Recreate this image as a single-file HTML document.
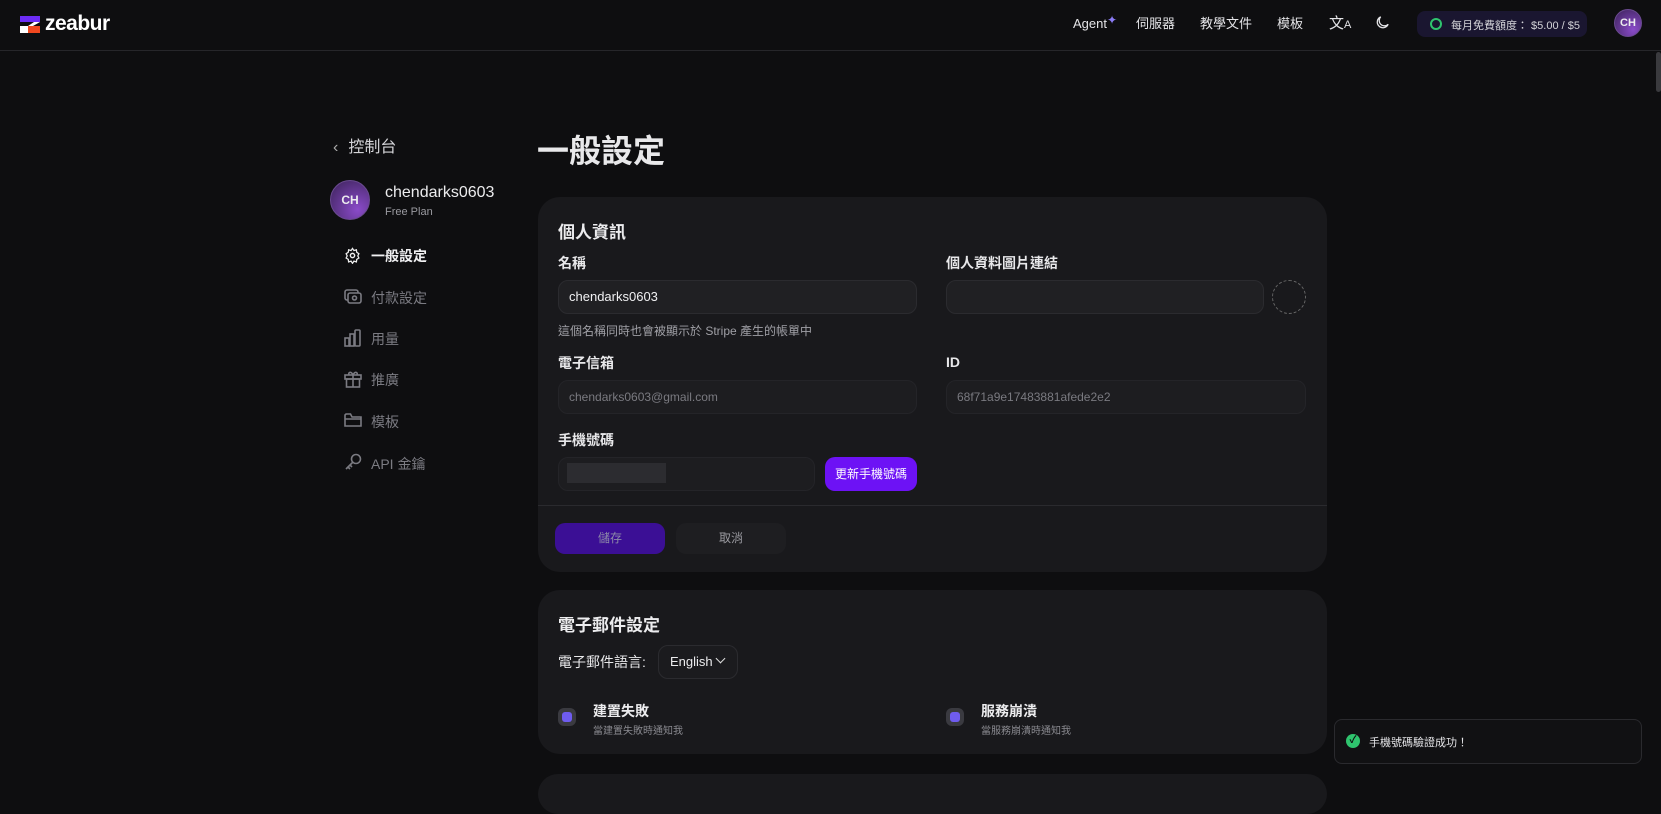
<!DOCTYPE html>
<html><head><meta charset="utf-8"><style>
*{box-sizing:border-box;margin:0;padding:0}
body{width:1661px;height:783px;overflow:hidden;background:#0e0e10;font-family:"Liberation Sans","Noto Sans CJK TC",sans-serif;color:#ececee;position:relative}
.a{position:absolute}
.hdr{left:0;top:0;width:1661px;height:51px;border-bottom:1px solid #26262a;background:#0e0e10}
.nav{font-size:13px;color:#e4e4e7;top:13px}
.card{background:#19191c;border-radius:22px}
.inp{background:#202023;border:1px solid #2b2b2f;border-radius:10px}
.lbl{font-size:14px;font-weight:bold;color:#e8e8ea}
.mi{font-size:14px;color:#7b7b82}
.ic{stroke:#7b7b82;fill:none;stroke-width:1.6}
</style></head><body>
<div class="a hdr"></div>
<svg class="a" style="left:20px;top:16px" width="21" height="17" viewBox="0 0 21 17"><rect x="0" y="0" width="20" height="6" fill="#6c2cf5"/><rect x="0" y="10" width="8" height="7" fill="#fff"/><rect x="8" y="10" width="12" height="7" fill="#f0481f"/><polygon points="14,6 20,6 13,10 8,10" fill="#fff"/></svg>
<div class="a" style="left:45px;top:12px;font-size:21px;font-weight:bold;color:#fff;letter-spacing:-0.5px">zeabur</div>
<div class="a nav" style="left:1073px">Agent<span style="color:#8b7cf6;font-size:12px;vertical-align:4px">✦</span></div>
<div class="a nav" style="left:1136px">伺服器</div>
<div class="a nav" style="left:1200px">教學文件</div>
<div class="a nav" style="left:1277px">模板</div>
<div class="a nav" style="left:1329px;top:12px;font-size:15px">文<span style="font-size:11px">A</span></div>
<svg class="a" style="left:1374px;top:14px" width="17" height="17" viewBox="0 0 24 24"><path d="M20 14.5A8 8 0 1 1 9.5 4a7 7 0 0 0 10.5 10.5z" fill="none" stroke="#e4e4e7" stroke-width="1.8"/></svg>
<div class="a" style="left:1417px;top:11px;width:170px;height:26px;border-radius:8px;background:#1a1630"></div>
<div class="a" style="left:1430px;top:18px;width:12px;height:12px;border-radius:50%;border:2px solid #2fc46e"></div>
<div class="a" style="left:1451px;top:17px;font-size:11px;color:#d4d4d8">每月免費額度： $5.00 / $5</div>
<div class="a" style="left:1614px;top:9px;width:28px;height:28px;border-radius:50%;background:radial-gradient(circle at 70% 75%,#8a4bc9,#3b2258);border:1px solid #6a4a90;font-size:11px;font-weight:bold;text-align:center;line-height:26px">CH</div>
<div class="a" style="left:1656px;top:52px;width:5px;height:40px;background:#3a3a3e;border-radius:3px"></div>

<div class="a" style="left:333px;top:133px;font-size:16px;color:#d4d4d8"><span style="color:#aaa;margin-right:10px">‹</span>控制台</div>
<div class="a" style="left:330px;top:180px;width:40px;height:40px;border-radius:50%;background:radial-gradient(circle at 70% 75%,#8a4bc9,#3b2258);border:1px solid #6a4a90;font-size:12px;font-weight:bold;text-align:center;line-height:38px">CH</div>
<div class="a" style="left:385px;top:184px;font-size:16px;color:#ececee">chendarks0603</div>
<div class="a" style="left:385px;top:206px;font-size:11px;color:#9a9aa0">Free Plan</div>
<svg class="a" style="left:344px;top:247px" width="17" height="17" viewBox="0 0 24 24"><circle cx="12" cy="12" r="3" fill="none" stroke="#eee" stroke-width="2"/><path d="M12 2l2 3 3.5-1 .5 3.5 3 2-1.5 3 1.5 3-3 2-.5 3.5-3.5-1-2 3-2-3-3.5 1-.5-3.5-3-2 1.5-3-1.5-3 3-2 .5-3.5 3.5 1z" fill="none" stroke="#eee" stroke-width="1.8"/></svg>
<div class="a" style="left:371px;top:246px;font-size:14px;font-weight:bold;color:#f0f0f2">一般設定</div>
<svg class="a" style="left:344px;top:288px" width="18" height="17" viewBox="0 0 18 17"><rect class="ic" x="1" y="2" width="13" height="10" rx="2"/><rect class="ic" x="4" y="5" width="13" height="10" rx="2" style="fill:#0e0e10"/><circle class="ic" cx="10.5" cy="10" r="2"/></svg>
<div class="a mi" style="left:371px;top:288px">付款設定</div>
<svg class="a" style="left:344px;top:329px" width="18" height="18" viewBox="0 0 18 18"><rect class="ic" x="1" y="9" width="4" height="8"/><rect class="ic" x="6" y="5" width="4" height="12"/><rect class="ic" x="11" y="1" width="5" height="16" rx="1"/></svg>
<div class="a mi" style="left:371px;top:329px">用量</div>
<svg class="a" style="left:344px;top:370px" width="18" height="18" viewBox="0 0 18 18"><rect class="ic" x="1" y="5" width="16" height="4"/><rect class="ic" x="2.5" y="9" width="13" height="8"/><path class="ic" d="M9 5v12M9 5C7 1 4 2 5 5M9 5c2-4 5-3 4 0"/></svg>
<div class="a mi" style="left:371px;top:370px">推廣</div>
<svg class="a" style="left:344px;top:412px" width="18" height="16" viewBox="0 0 18 16"><path class="ic" d="M1 3v11h16V5H8L6.5 2H2z M1 7h16"/></svg>
<div class="a mi" style="left:371px;top:412px">模板</div>
<svg class="a" style="left:344px;top:453px" width="18" height="18" viewBox="0 0 18 18"><circle class="ic" cx="12" cy="6" r="4.5"/><path class="ic" d="M9 9l-7 7M4 14l2 2M6 12l2 2"/></svg>
<div class="a mi" style="left:371px;top:454px">API 金鑰</div>

<div class="a" style="left:537px;top:126px;font-size:32px;font-weight:bold;color:#e8e8ea">一般設定</div>

<div class="a card" style="left:538px;top:197px;width:789px;height:375px"></div>
<div class="a" style="left:558px;top:218px;font-size:17px;font-weight:bold">個人資訊</div>
<div class="a lbl" style="left:558px;top:253px">名稱</div>
<div class="a inp" style="left:558px;top:280px;width:359px;height:34px"></div>
<div class="a" style="left:569px;top:289px;font-size:13px;color:#f0f0f2">chendarks0603</div>
<div class="a" style="left:558px;top:322px;font-size:12px;color:#a0a0a6">這個名稱同時也會被顯示於 Stripe 產生的帳單中</div>
<div class="a lbl" style="left:946px;top:253px">個人資料圖片連結</div>
<div class="a inp" style="left:946px;top:280px;width:318px;height:34px"></div>
<div class="a" style="left:1272px;top:280px;width:34px;height:34px;border-radius:50%;border:1px dashed #666"></div>
<div class="a lbl" style="left:558px;top:353px">電子信箱</div>
<div class="a inp" style="left:558px;top:380px;width:359px;height:34px;background:#1d1d20;border-color:#242428"></div>
<div class="a" style="left:569px;top:390px;font-size:12px;color:#7a7a80">chendarks0603@gmail.com</div>
<div class="a lbl" style="left:946px;top:354px">ID</div>
<div class="a inp" style="left:946px;top:380px;width:360px;height:34px;background:#1d1d20;border-color:#242428"></div>
<div class="a" style="left:957px;top:390px;font-size:12px;color:#7a7a80">68f71a9e17483881afede2e2</div>
<div class="a lbl" style="left:558px;top:430px">手機號碼</div>
<div class="a inp" style="left:558px;top:457px;width:257px;height:34px;background:#1d1d20;border-color:#242428"></div>
<div class="a" style="left:567px;top:463px;width:99px;height:20px;background:#2c2c30"></div>
<div class="a" style="left:825px;top:457px;width:92px;height:34px;border-radius:10px;background:#6d12f5;font-size:12px;color:#fff;text-align:center;line-height:34px">更新手機號碼</div>
<div class="a" style="left:538px;top:505px;width:789px;height:1px;background:#2a2a2e"></div>
<div class="a" style="left:555px;top:523px;width:110px;height:31px;border-radius:10px;background:#3b0f95;font-size:12px;color:#8d8aa8;text-align:center;line-height:31px">儲存</div>
<div class="a" style="left:676px;top:523px;width:110px;height:31px;border-radius:10px;background:#1e1e21;font-size:12px;color:#9a9aa0;text-align:center;line-height:31px">取消</div>

<div class="a card" style="left:538px;top:590px;width:789px;height:164px"></div>
<div class="a" style="left:558px;top:611px;font-size:17px;font-weight:bold">電子郵件設定</div>
<div class="a" style="left:558px;top:652px;font-size:14px;color:#e8e8ea">電子郵件語言:</div>
<div class="a" style="left:658px;top:645px;width:80px;height:34px;border-radius:10px;border:1px solid #2b2b2f;background:#1b1b1e;font-size:13px;line-height:32px;padding-left:11px">English <span style="display:inline-block;width:7px;height:7px;border-right:1.3px solid #ddd;border-bottom:1.3px solid #ddd;transform:rotate(45deg);vertical-align:4px;margin-left:1px"></span></div>
<div class="a" style="left:558px;top:708px;width:18px;height:18px;border-radius:6px;background:#3a3a40"><div style="margin:4px;width:10px;height:10px;border-radius:3px;background:#6f5cf0"></div></div>
<div class="a" style="left:593px;top:701px;font-size:14px;font-weight:bold">建置失敗</div>
<div class="a" style="left:593px;top:722px;font-size:10px;color:#8a8a90">當建置失敗時通知我</div>
<div class="a" style="left:946px;top:708px;width:18px;height:18px;border-radius:6px;background:#3a3a40"><div style="margin:4px;width:10px;height:10px;border-radius:3px;background:#6f5cf0"></div></div>
<div class="a" style="left:981px;top:701px;font-size:14px;font-weight:bold">服務崩潰</div>
<div class="a" style="left:981px;top:722px;font-size:10px;color:#8a8a90">當服務崩潰時通知我</div>
<div class="a card" style="left:538px;top:774px;width:789px;height:40px"></div>

<div class="a" style="left:1334px;top:719px;width:308px;height:45px;border-radius:8px;background:#111113;border:1px solid #2a2a2e"></div>
<div class="a" style="left:1346px;top:734px;width:14px;height:14px;border-radius:50%;background:#2fc46e;color:#0e0e10;font-size:10px;font-weight:bold;text-align:center;line-height:14px">✓</div>
<div class="a" style="left:1369px;top:734px;font-size:11px;color:#e4e4e7">手機號碼驗證成功！</div>
</body></html>
